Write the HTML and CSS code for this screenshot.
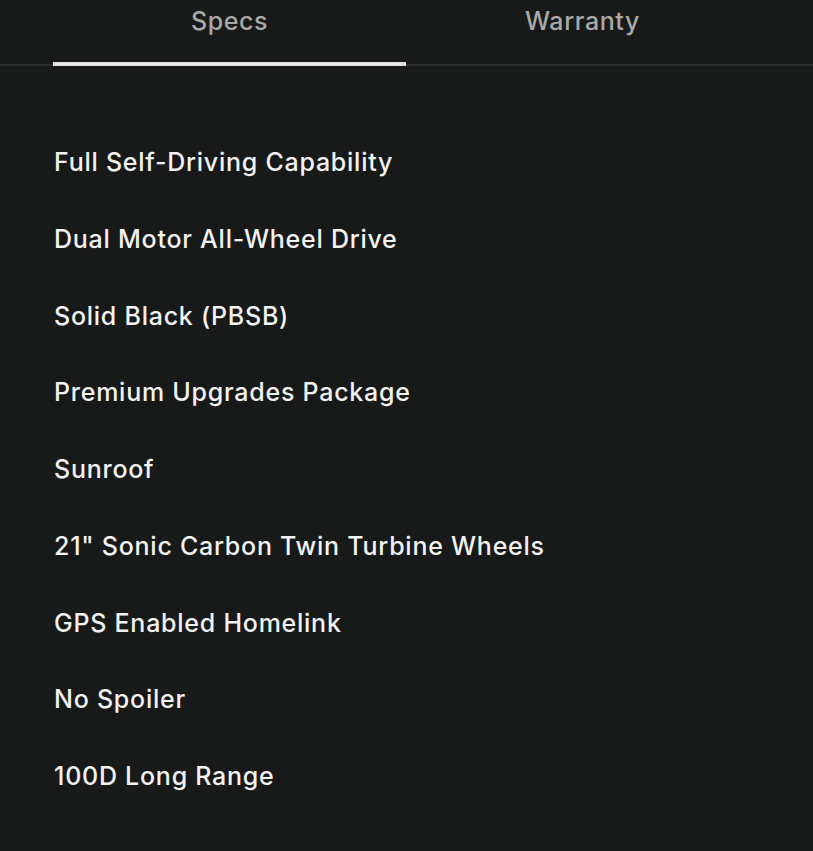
FILE: index.html
```html
<!DOCTYPE html>
<html lang="en">
<head>
    <meta charset="UTF-8">
    <meta name="viewport" content="width=device-width, initial-scale=1.0">
    <title>Specs</title>
    <link rel="stylesheet" href="styles.css">
</head>
<body>
    <div class="tabs">
        <div class="tab active">Specs</div>
        <div class="tab">Warranty</div>
    </div>

    <ul class="spec-list">
        <li>Full Self-Driving Capability</li>
        <li>Dual Motor All-Wheel Drive</li>
        <li>Solid Black (PBSB)</li>
        <li>Premium Upgrades Package</li>
        <li>Sunroof</li>
        <li>21" Sonic Carbon Twin Turbine Wheels</li>
        <li>GPS Enabled Homelink</li>
        <li>No Spoiler</li>
        <li>100D Long Range</li>
    </ul>
</body>
</html>
```

FILE: styles.css
```css
/* General Styles */
body {
    font-family: Inter, 'Noto Sans', Arial, sans-serif;
    margin: 0;
    padding: 0;
    background-color: #181a1a;
    color: #f2f2f2;
}

/* Tabs */
.tabs {
    display: flex;
    padding-left: 53px;
    border-bottom: 2px solid #2b2d2d;
}

.tab {
    width: 353px;
    text-align: center;
    font-size: 25px;
    font-weight: 500;
    letter-spacing: 0.6px;
    color: #a9a9a9;
    line-height: 34px;
    padding: 4px 0 24px;
    border-bottom: 4px solid transparent;
    margin-bottom: -2px;
}

.tab.active {
    border-bottom-color: #e2e2e2;
}

/* Spec list */
.spec-list {
    list-style: none;
    margin: 0;
    padding: 58px 0 0 54px;
}

.spec-list li {
    font-size: 25px;
    font-weight: 500;
    letter-spacing: 0.75px;
    line-height: 32.75px;
    padding: 22px 0;
}
```
